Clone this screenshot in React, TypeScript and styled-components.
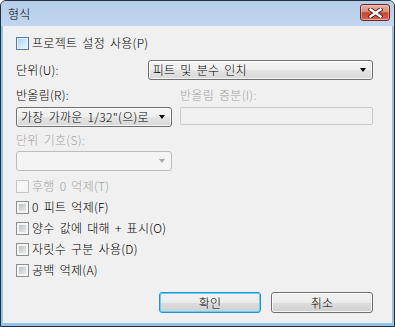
import React from 'react';
import styled, { createGlobalStyle } from 'styled-components';

const GlobalStyle = createGlobalStyle`
  html, body { margin: 0; padding: 0; background: #ffffff; }
  body {
    font-family: "Noto Sans CJK KR", "Noto Sans", sans-serif;
    font-size: 12px;
    font-weight: 300;
    word-spacing: 2px;
    letter-spacing: 0.3px;
    color: #000;
  }
  * { box-sizing: border-box; }
`;

const Window = styled.div`
  width: 395px;
  height: 327px;
  display: flex;
  flex-direction: column;
  border: 1px solid #24303b;
  border-radius: 6px 6px 0 0;
  background: #92c4ea;
  overflow: hidden;
`;

const TitleBar = styled.div`
  height: 25px;
  flex: none;
  display: flex;
  align-items: flex-start;
  justify-content: space-between;
  padding: 3px 4px 0 7px;
  background: linear-gradient(#b5cdea 0%, #c1d6ef 100%);
`;

const Title = styled.span`
  line-height: 19px;
  font-size: 12px;
  color: #000;
`;

const CloseButton = styled.div`
  width: 30px;
  height: 17px;
  display: flex;
  align-items: center;
  justify-content: center;
  border: 1px solid #6e2a20;
  border-radius: 3px;
  background: linear-gradient(#eab0a4 0%, #dc8a7b 45%, #c54632 52%, #cf5a43 85%, #dc7c64 100%);
  box-shadow: inset 0 0 0 1px rgba(255, 220, 210, 0.45);
`;

const Body = styled.div`
  flex: 1;
  margin: 0 2px 3px 2px;
  background: #f0f0f0;
  padding: 10px 19px 0 13px;
  display: flex;
  flex-direction: column;
`;

const Row = styled.div<{ $mt?: number }>`
  display: flex;
  align-items: center;
  margin-top: ${p => p.$mt ?? 0}px;
`;

const Label = styled.span<{ $disabled?: boolean; $width?: number }>`
  display: block;
  height: 14px;
  line-height: 14px;
  white-space: nowrap;
  color: ${p => (p.$disabled ? '#a3a3a3' : '#000')};
  ${p => (p.$width ? `width: ${p.$width}px;` : '')}
`;

const Box = styled.span<{ $state: 'hot' | 'normal' | 'disabled' }>`
  width: 13px;
  height: 13px;
  flex: none;
  margin-right: 3px;
  border: 1px solid
    ${p => (p.$state === 'hot' ? '#4f7fa6' : p.$state === 'disabled' ? '#c6c6c6' : '#8e8f8f')};
  background: ${p =>
    p.$state === 'hot'
      ? 'linear-gradient(135deg, #a9d3f2 0%, #cfe8f9 55%, #eef8fe 100%)'
      : p.$state === 'disabled'
      ? '#f7f7f7'
      : 'linear-gradient(135deg, #adb1b6 0%, #d4d6d9 50%, #f0f0f0 100%)'};
  box-shadow: inset 0 0 0 ${p => (p.$state === 'hot' ? '1px #e4f2fc' : '2px #f4f4f4')};
`;

const CheckRow = styled.label`
  display: flex;
  align-items: center;
  height: 14px;
`;

const CheckList = styled.div`
  display: flex;
  flex-direction: column;
  gap: 7px;
  margin-top: 8px;
`;

const Combo = styled.div<{ $width: number; $disabled?: boolean }>`
  width: ${p => p.$width}px;
  height: 20px;
  display: flex;
  align-items: center;
  justify-content: space-between;
  padding: 0 5px 0 4px;
  border: 1px solid ${p => (p.$disabled ? '#b9bdc0' : '#707070')};
  border-radius: 3px;
  background: ${p =>
    p.$disabled
      ? '#f4f4f4'
      : 'linear-gradient(#f5f5f5 0%, #eeeeee 50%, #e3e3e3 51%, #d9d9d9 100%)'};
  box-shadow: ${p => (p.$disabled ? 'none' : 'inset 0 0 0 1px rgba(255,255,255,0.7)')};
`;

const ComboText = styled.span`
  line-height: 14px;
  white-space: nowrap;
  color: #000;
`;

const Arrow = styled.span<{ $disabled?: boolean }>`
  width: 0;
  height: 0;
  flex: none;
  border-left: 3.5px solid transparent;
  border-right: 3.5px solid transparent;
  border-top: 4px solid ${p => (p.$disabled ? '#a8a8a8' : '#000')};
  margin-right: 1px;
`;

const Grid = styled.div`
  display: grid;
  grid-template-columns: 156px 193px;
  column-gap: 8px;
  row-gap: 5px;
  margin-top: 8px;
  align-items: start;
`;

const TextBox = styled.div`
  width: 193px;
  height: 18px;
  border: 1px solid #cbcbcb;
  border-radius: 2px;
  background: #f0f0f0;
`;

const ButtonBar = styled.div`
  display: flex;
  justify-content: flex-end;
  gap: 10px;
  margin-top: 15px;
`;

const Button = styled.div<{ $default?: boolean }>`
  width: 102px;
  height: 21px;
  display: flex;
  align-items: center;
  justify-content: center;
  border: 1px solid ${p => (p.$default ? '#2b8fd6' : '#707070')};
  border-radius: 3px;
  background: linear-gradient(#f2f2f2 0%, #ebebeb 50%, #dddddd 51%, #cfcfcf 100%);
  box-shadow: inset 0 0 0 1px ${p => (p.$default ? '#5fd2f8' : 'rgba(255,255,255,0.75)')};
  line-height: 14px;
`;

const CloseIcon = () => (
  <svg width="15" height="10" viewBox="0 0 15 10">
    <path d="M2.5 1.5 L12.5 8.5 M12.5 1.5 L2.5 8.5" stroke="#4a2019" strokeWidth="4.2" strokeLinecap="square" fill="none" />
    <path d="M2.5 1.5 L12.5 8.5 M12.5 1.5 L2.5 8.5" stroke="#ffffff" strokeWidth="2.4" strokeLinecap="square" fill="none" />
  </svg>
);

type CheckState = 'hot' | 'normal' | 'disabled';

const Check = ({ label, state }: { label: string; state: CheckState }) => (
  <CheckRow>
    <Box $state={state} />
    <Label $disabled={state === 'disabled'}>{label}</Label>
  </CheckRow>
);

export default function App() {
  return (
    <>
      <GlobalStyle />
      <Window>
        <TitleBar>
          <Title>형식</Title>
          <CloseButton>
            <CloseIcon />
          </CloseButton>
        </TitleBar>
        <Body>
          <Check label="프로젝트 설정 사용(P)" state="hot" />
          <Row $mt={10}>
            <Label $width={134}>단위(U):</Label>
            <Combo $width={229}>
              <ComboText>피트 및 분수 인치</ComboText>
              <Arrow />
            </Combo>
          </Row>
          <Grid>
            <Label>반올림(R):</Label>
            <Label $disabled>반올림 증분(I):</Label>
            <Combo $width={156}>
              <ComboText>가장 가까운 1/32"(으)로</ComboText>
              <Arrow />
            </Combo>
            <TextBox />
          </Grid>
          <Row $mt={6}>
            <Label $disabled>단위 기호(S):</Label>
          </Row>
          <Row $mt={4}>
            <Combo $width={156} $disabled>
              <ComboText />
              <Arrow $disabled />
            </Combo>
          </Row>
          <CheckList>
            <Check label="후행 0 억제(T)" state="disabled" />
            <Check label="0 피트 억제(F)" state="normal" />
            <Check label="양수 값에 대해 + 표시(O)" state="normal" />
            <Check label="자릿수 구분 사용(D)" state="normal" />
            <Check label="공백 억제(A)" state="normal" />
          </CheckList>
          <ButtonBar>
            <Button $default>확인</Button>
            <Button>취소</Button>
          </ButtonBar>
        </Body>
      </Window>
    </>
  );
}
